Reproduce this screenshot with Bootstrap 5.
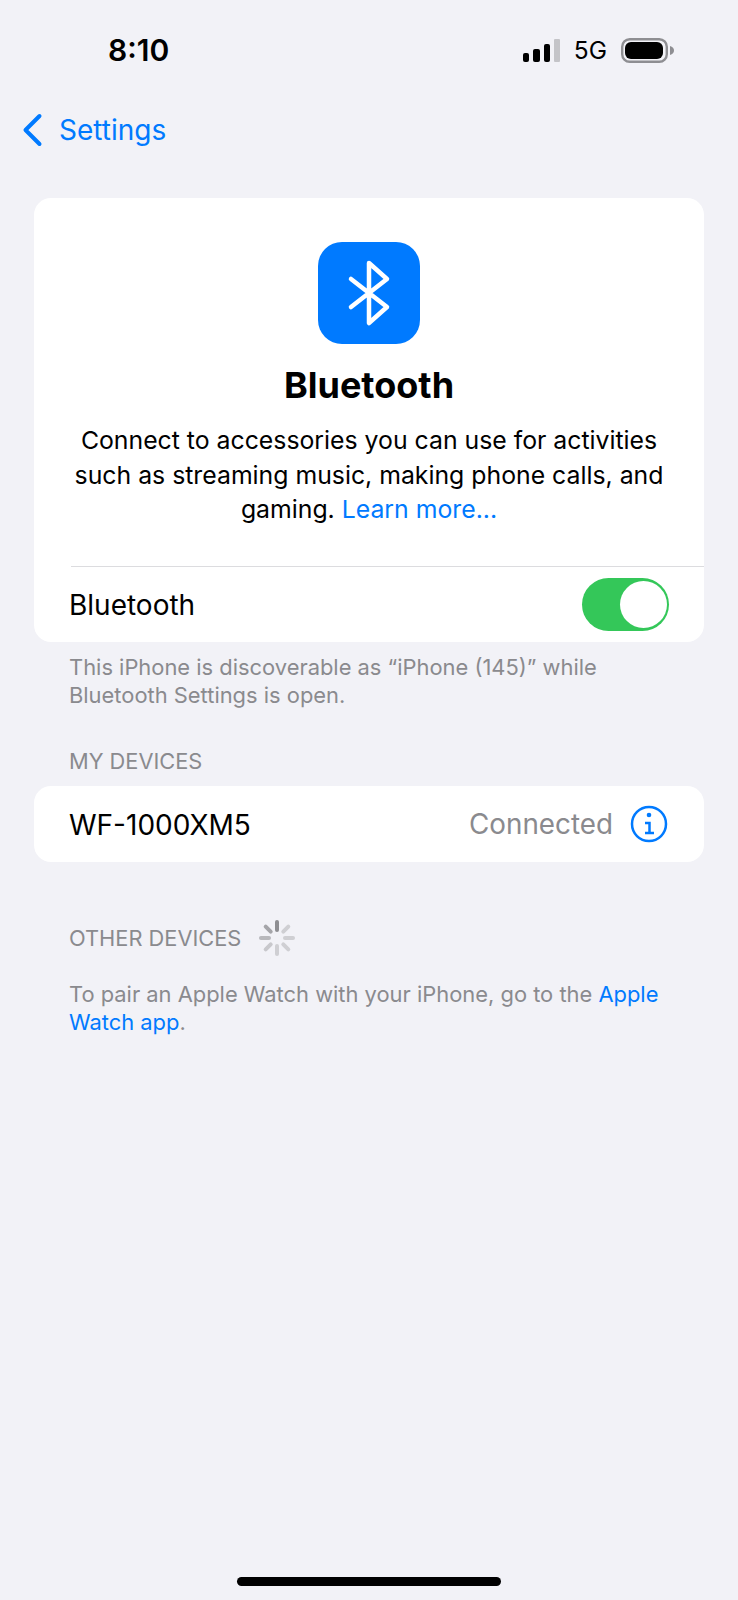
<!DOCTYPE html>
<html lang="en">
<head>
    <meta charset="UTF-8">
    <meta name="viewport" content="width=device-width, initial-scale=1.0">
    <title>Bluetooth</title>
    <link href="https://cdn.jsdelivr.net/npm/bootstrap@5.3.2/dist/css/bootstrap.min.css" rel="stylesheet">
    <style>
        body {
            font-family: Inter, "Liberation Sans", sans-serif;
            background-color: #f2f2f7;
            color: #000;
            width: 738px;
            height: 1600px;
            overflow: hidden;
        }
        a { color: #007aff; text-decoration: none; }
        .phone-page { height: 1600px; }
        .status-bar { height: 100px; padding: 31px 64px 0 108px; }
        .status-time { font-size: 30px; font-weight: 600; line-height: 38px; }
        .status-right { height: 38px; }
        .status-net { font-size: 24.5px; line-height: 30px; margin: 0 14px; }
        .back-bar { height: 61px; padding: 0 0 2px 22px; font-size: 28px; gap: 16px; }
        .group-box { background: #fff; border-radius: 17px; margin: 0 34px; }
        .intro-box { padding-top: 44px; height: 444px; margin-top: 37px; }
        .app-tile { width: 102px; height: 102px; border-radius: 24px; background: #007aff; }
        .intro-title { font-size: 36px; font-weight: 700; line-height: 44px; margin: 19px 0 16px; }
        .intro-text { font-size: 24.8px; line-height: 34.5px; padding: 0 20px; }
        .toggle-row { margin-left: 37px; height: 76px; border-top: 1px solid #dcdcdf; padding-right: 35px; font-size: 28px; }
        .toggle-name { margin-left: -2px; }
        .ios-switch { width: 87px; height: 53px; border-radius: 27px; background: #34c759; padding: 3px 2px; }
        .ios-knob { width: 47px; height: 47px; border-radius: 50%; background: #fff; }
        .foot-note { font-size: 21.9px; line-height: 27.5px; color: #8a8a8e; padding: 0 69px; }
        .section-label { font-size: 21.8px; line-height: 27px; color: #8a8a8e; padding: 0 69px; }
        .label-mine { margin-top: 39px; }
        .label-other { margin-top: 58px; gap: 18px; }
        .pair-note { margin-top: 25px; }
        .device-box { height: 76px; margin-top: 11px; padding: 0 36px 0 35px; font-size: 28px; }
        .device-name { padding-top: 2px; }
        .device-status { color: #8a8a8e; font-size: 27.8px; margin-right: 17px; padding-top: 2px; }
        .home-bar { width: 264px; height: 9px; border-radius: 5px; background: #000; margin-bottom: 14px; }
    </style>
</head>
<body>
    <div class="phone-page d-flex flex-column">
        <!-- Status bar -->
        <div class="status-bar d-flex justify-content-between align-items-start">
            <div class="status-time">8:10</div>
            <div class="status-right d-flex align-items-center">
                <svg width="37" height="23" viewBox="0 0 37 23">
                    <rect x="0" y="14" width="6" height="9" rx="2" fill="#000"/>
                    <rect x="10" y="10" width="7" height="13" rx="2" fill="#000"/>
                    <rect x="21" y="5" width="6" height="18" rx="2" fill="#000"/>
                    <rect x="31" y="0" width="6" height="23" rx="1" fill="#c4c4c8"/>
                </svg>
                <span class="status-net">5G</span>
                <svg width="53" height="25" viewBox="0 0 53 25">
                    <rect x="1.200" y="1.200" width="44.600" height="22.600" rx="7.500" fill="none" stroke="#8e8e92" stroke-width="2.400"/>
                    <rect x="4" y="4" width="38" height="17" rx="6" fill="#000"/>
                    <path d="M49 8c2.600.6 4 2.300 4 4.500S51.600 16.400 49 17z" fill="#8e8e92"/>
                </svg>
            </div>
        </div>

        <!-- Back link -->
        <a href="#" class="back-bar d-flex align-items-center">
            <svg width="21" height="34" viewBox="0 0 21 34">
                <path d="M17.500 3 3.500 17l14 14" fill="none" stroke="#007aff" stroke-width="4" stroke-linecap="round" stroke-linejoin="round"/>
            </svg>
            <span>Settings</span>
        </a>

        <!-- Intro card -->
        <div class="group-box intro-box d-flex flex-column text-center">
            <div class="app-tile d-flex align-items-center justify-content-center mx-auto">
                <svg width="44" height="68" viewBox="0 0 44 68">
                    <path d="M4 20 40 48 22 64V4L40 20 4 48" fill="none" stroke="#fff" stroke-width="4.500" stroke-linecap="round" stroke-linejoin="round"/>
                </svg>
            </div>
            <div class="intro-title">Bluetooth</div>
            <div class="intro-text">Connect to accessories you can use for activities such as streaming music, making phone calls, and gaming. <a href="#">Learn more...</a></div>
            <div class="toggle-row d-flex align-items-center justify-content-between mt-auto">
                <span class="toggle-name">Bluetooth</span>
                <div class="ios-switch d-flex justify-content-end">
                    <div class="ios-knob"></div>
                </div>
            </div>
        </div>

        <div class="foot-note mt-2 pt-1">This iPhone is discoverable as “iPhone (145)” while Bluetooth Settings is open.</div>

        <div class="section-label label-mine">MY DEVICES</div>

        <!-- Devices -->
        <div class="group-box device-box d-flex align-items-center justify-content-between">
            <span class="device-name">WF-1000XM5</span>
            <div class="d-flex align-items-center">
                <span class="device-status">Connected</span>
                <svg width="38" height="38" viewBox="0 0 38 38">
                    <circle cx="19" cy="19" r="17" fill="none" stroke="#007aff" stroke-width="2.500"/>
                    <circle cx="19" cy="10" r="2.300" fill="#007aff"/>
                    <path d="M15 18h4.500v10M15 28h9" fill="none" stroke="#007aff" stroke-width="2.500"/>
                </svg>
            </div>
        </div>

        <div class="section-label label-other d-flex align-items-center">
            <span>OTHER DEVICES</span>
            <svg width="36" height="36" viewBox="0 0 36 36" stroke-width="4" stroke-linecap="round">
                <path d="M18 2v8" stroke="#8e8e92"/>
                <path d="M29.300 6.700l-5 5" stroke="#cfcfd3"/>
                <path d="M34 18h-8" stroke="#cfcfd3"/>
                <path d="M29.300 29.300l-5-5" stroke="#cfcfd3"/>
                <path d="M18 34v-8" stroke="#cfcfd3"/>
                <path d="M6.700 29.300l5-5" stroke="#c8c8cc"/>
                <path d="M2 18h8" stroke="#b8b8bc"/>
                <path d="M6.700 6.700l5 5" stroke="#a5a5a9"/>
            </svg>
        </div>

        <div class="foot-note pair-note">To pair an Apple Watch with your iPhone, go to the <a href="#">Apple Watch app</a>.</div>

        <!-- Home indicator -->
        <div class="home-bar mt-auto mx-auto"></div>
    </div>

    <script src="https://cdn.jsdelivr.net/npm/bootstrap@5.3.2/dist/js/bootstrap.bundle.min.js"></script>
</body>
</html>
